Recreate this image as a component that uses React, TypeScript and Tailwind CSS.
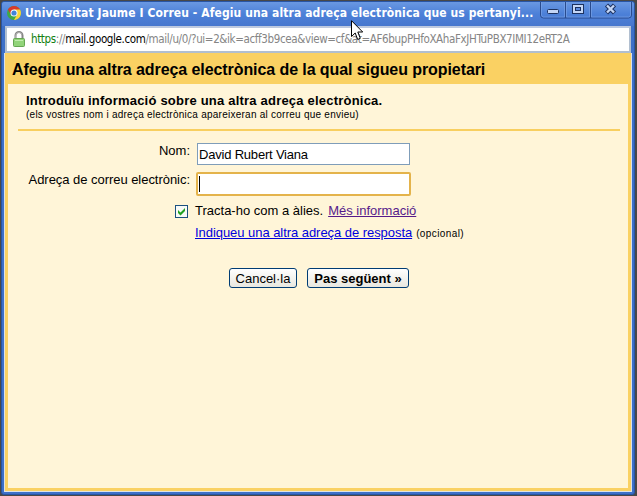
import React from 'react';

function ChromeLogo() {
  return (
    <svg width="14" height="14" viewBox="0 0 14 14" className="shrink-0">
      <circle cx="7" cy="7" r="7" fill="#3fa845" />
      <path d="M7 7L.94 3.5A7 7 0 0 1 13.06 3.5Z" fill="#d93a2b" />
      <path d="M7 3.5H13.06A7 7 0 0 1 7 14L10 8.7Z" fill="#fbd43a" />
      <path d="M.94 3.5L4 8.7 7 7 7 3.5Z" fill="#d93a2b" />
      <circle cx="7" cy="7" r="3.5" fill="#fff" />
      <circle cx="7" cy="7" r="2.6" fill="#4384d8" />
    </svg>
  );
}

function Lock() {
  return (
    <svg width="12" height="16" viewBox="0 0 12 16" className="shrink-0">
      <path d="M2.5 8V4.5a3.5 3.5 0 0 1 7 0V8" fill="none" stroke="#858585" strokeWidth="2" />
      <path d="M2.7 7V4.5a3.3 3.3 0 0 1 6.2-1.3" fill="none" stroke="#c9c9c9" strokeWidth=".7" />
      <rect x=".5" y="7.5" width="11" height="8" rx="1" fill="#91d47a" stroke="#65a653" />
      <path d="M2 9.5h8" stroke="#c0edae" />
    </svg>
  );
}

function WindowButtons() {
  return (
    <svg width="94" height="18" viewBox="0 0 94 18" className="-mt-px shrink-0">
      <path d="M.5 0V14q0 3 3 3H88.500q3 0 3-3V0M25.500 0V17M50.500 0V17" fill="none" stroke="#294b8e" />
      <path d="M1.500 0V14q0 2 2 2H24.500V0M26.500 0V16H49.500V0M51.500 0V16H88.500q2 0 2-2V0" fill="none" stroke="#7da5e8" strokeOpacity=".6" />
      <rect x="7.500" y="8.500" width="11" height="4" rx="1" fill="#c4d6f5" stroke="#1d3260" />
      <rect x="32.500" y="3.500" width="11" height="9" fill="#c4d6f5" stroke="#1d3260" />
      <rect x="35.500" y="6.500" width="5" height="3" fill="#5c8ade" stroke="#1d3260" />
      <path d="M66.500 4l8 8M74.500 4l-8 8" stroke="#1d3260" strokeWidth="4.500" />
      <path d="M67 4.500l7 7M74 4.500l-7 7" stroke="#c4d6f5" strokeWidth="2.400" />
    </svg>
  );
}

function Titlebar() {
  return (
    <header className="flex h-6 shrink-0 items-start bg-gradient-to-b from-[#6a98e2] via-[#4c80d8] to-[#4777ce] pl-[5px]">
      <div className="flex h-[22px] w-[533px] items-center gap-1">
        <ChromeLogo />
        <span className="whitespace-nowrap font-['DejaVu_Sans_Condensed','DejaVu_Sans',sans-serif] text-[12px] font-bold tracking-[0.1px] text-white">
          Universitat Jaume I Correu - Afegiu una altra adreça electrònica que us pertanyi...
        </span>
      </div>
      <WindowButtons />
    </header>
  );
}

function AddressBar() {
  return (
    <div className="mx-px flex h-[27px] shrink-0 items-center border-2 border-[#b1bfd0] border-t-[#bdc9df] bg-white pb-px pl-[6px]">
      <Lock />
      <span className="ml-[6px] whitespace-nowrap pt-px font-['DejaVu_Sans_Condensed','DejaVu_Sans',sans-serif] text-[11.5px] tracking-[-0.37px] text-[#858585]">
        <span className="text-[#108010]">https</span>://<span className="text-black">mail.google.com</span>/mail/u/0/?ui=2&amp;ik=acff3b9cea&amp;view=cf&amp;at=AF6bupPHfoXAhaFxJHTuPBX7IMI12eRT2A
      </span>
    </div>
  );
}

function Pointer() {
  return (
    <svg width="13" height="21" viewBox="0 0 13 21" className="absolute left-[351px] top-5">
      <path d="M.5.7V16.500L4.200 13l2.500 6.500 2.600-1.200L6.800 12H11.700Z" fill="#fff" stroke="#000" />
    </svg>
  );
}

export default function App() {
  return (
    <div className="relative h-[496px] w-[637px] overflow-hidden bg-[#484848] pl-px pt-px">
      <div className="flex h-[494px] w-[634px] flex-col overflow-hidden rounded-[3px] border border-[#2855a5] bg-[#3d70c8]">
        <Titlebar />
        <div className="flex min-h-0 flex-1 flex-col pb-[2px] pl-[2px] pr-[2px]">
          <AddressBar />
          <main className="flex min-h-0 flex-1 flex-col border border-[#dce2e8] border-t-0 bg-[#fad163] px-[3px] pb-[3px] font-['Liberation_Sans',Arial,sans-serif] text-[13px] text-black">
            <h1 className="flex h-[31px] shrink-0 items-center whitespace-nowrap pl-[4px] pt-[2px] text-[16px] font-bold tracking-[-0.08px]">
              Afegiu una altra adreça electrònica de la qual sigueu propietari
            </h1>
            <div className="flex-1 bg-[#fff5d8] pl-[10px] pr-[8px] pt-[9px]">
              <section className="h-[38px] border-b-2 border-[#f8cf60] pl-[8px]">
                <h2 className="whitespace-nowrap text-[13px] font-bold leading-[16px] tracking-[0.21px]">Introduïu informació sobre una altra adreça electrònica.</h2>
                <p className="whitespace-nowrap text-[10px] leading-[12px] tracking-[0.25px]">(els vostres nom i adreça electrònica apareixeran al correu que envieu)</p>
              </section>
              <form className="pt-[12px]" onSubmit={(event) => event.preventDefault()}>
                <div className="flex h-[29px] items-start">
                  <label className="w-[173px] pr-px text-right leading-[15px]">Nom:</label>
                  <input className="ml-[6px] h-[22px] w-[213px] border border-[#7f9db9] bg-white pl-px text-[13px] tracking-[-0.2px] outline-none" defaultValue="David Rubert Viana" />
                </div>
                <div className="flex h-[30px] items-start">
                  <label className="w-[173px] whitespace-nowrap pr-px text-right leading-[16px] tracking-[-0.04px]">Adreça de correu electrònic:</label>
                  <div className="ml-[5px] flex h-[24px] w-[215px] items-center rounded-[2px] border-2 border-[#e4b34b] bg-white pl-px">
                    <span className="h-4 w-px bg-black" />
                  </div>
                </div>
                <div className="-mt-[2px] flex h-[22px] items-center pl-[157px]">
                  <svg width="13" height="13" viewBox="0 0 13 13" className="shrink-0">
                    <rect x=".5" y=".5" width="12" height="12" fill="#f8faf7" stroke="#1c5180" />
                    <path d="M3 5L5.500 7.500 10 3V6L5.500 10.500 3 8Z" fill="#21a121" />
                  </svg>
                  <span className="ml-[7px] whitespace-nowrap">Tracta-ho com a àlies.</span>
                  <a className="ml-[5px] whitespace-nowrap text-[#551a8b] underline">Més informació</a>
                </div>
                <div className="flex h-[22px] items-center pl-[177px]">
                  <a className="whitespace-nowrap tracking-[-0.05px] text-[#0000dd] underline">Indiqueu una altra adreça de resposta</a>
                  <span className="ml-[4px] whitespace-nowrap pt-px text-[10px] tracking-[0.4px]">(opcional)</span>
                </div>
                <div className="flex gap-[10px] pl-[211px] pt-[24px]">
                  <button type="button" className="h-5 w-[68px] whitespace-nowrap rounded-[3px] border border-[#003c74] bg-gradient-to-b from-white to-[#e8e7df]">Cancel·la</button>
                  <button type="submit" className="h-5 w-[102px] whitespace-nowrap rounded-[3px] border border-[#003c74] bg-gradient-to-b from-white to-[#e8e7df] font-bold">Pas següent »</button>
                </div>
              </form>
            </div>
          </main>
        </div>
      </div>
      <Pointer />
    </div>
  );
}
